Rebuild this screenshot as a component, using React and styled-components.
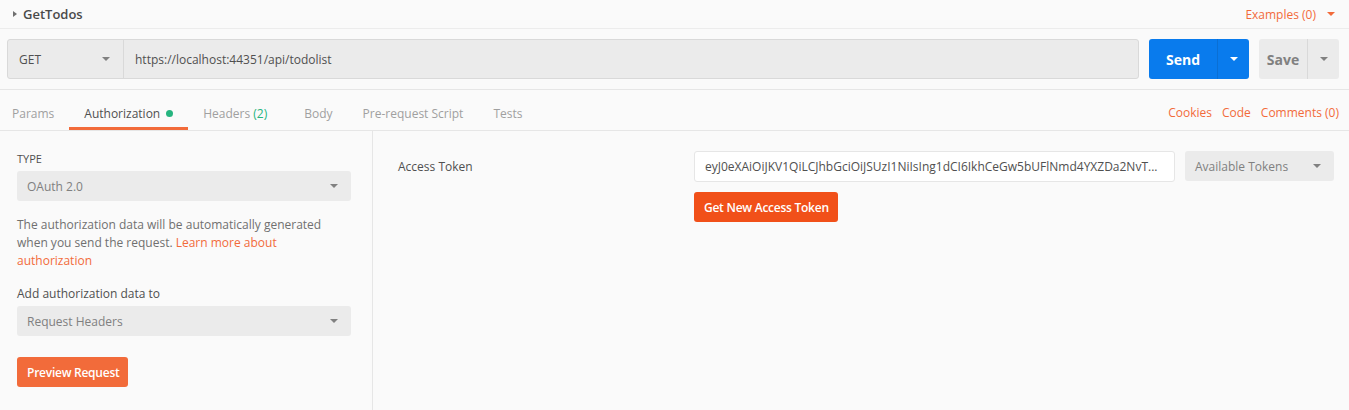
import React from "react";
import styled, { createGlobalStyle } from "styled-components";

const Global = createGlobalStyle`
  html, body { margin: 0; padding: 0; background: #fafafa; }
  body { font-family: "Open Sans", "Liberation Sans", sans-serif; color: #505050; font-size: 12px; }
  * { box-sizing: border-box; }
`;

const Page = styled.div`
  width: 1349px;
  height: 410px;
  background: #fafafa;
  display: flex;
  flex-direction: column;
`;

const TitleBar = styled.div`
  height: 29px;
  display: flex;
  align-items: center;
  justify-content: space-between;
  padding: 0 14px 0 13px;
  border-bottom: 1px solid #ececec;
`;

const Title = styled.div`
  display: flex;
  align-items: center;
  gap: 6px;
  font-size: 13px;
  font-weight: 600;
  color: #4a4a4a;
`;

const Caret = styled.span`
  width: 0;
  height: 0;
  border-top: 3px solid transparent;
  border-bottom: 3px solid transparent;
  border-left: 4px solid #707070;
`;

const DownCaret = styled.span`
  width: 0;
  height: 0;
  border-left: 4px solid transparent;
  border-right: 4px solid transparent;
  border-top: 4px solid ${(p) => p.$color || "#808080"};
`;

const Link = styled.span`
  color: #f26b3a;
  font-size: 12px;
`;

const Examples = styled.div`
  display: flex;
  align-items: center;
  gap: 11px;
`;

const RequestRow = styled.div`
  height: 61px;
  display: flex;
  align-items: center;
  padding: 0 10px 0 7px;
  border-bottom: 1px solid #e6e6e6;
`;

const UrlGroup = styled.div`
  flex: 1;
  height: 40px;
  display: flex;
  border: 1px solid #d9d9d9;
  border-radius: 3px;
  background: #ebebeb;
  margin-right: 10px;
`;

const Method = styled.div`
  width: 116px;
  display: flex;
  align-items: center;
  justify-content: space-between;
  padding: 0 13px 0 11px;
  border-right: 1px solid #d9d9d9;
  font-size: 12px;
  color: #505050;
`;

const Url = styled.div`
  flex: 1;
  display: flex;
  align-items: center;
  padding-left: 11px;
  font-size: 12px;
  color: #505050;
`;

const SplitButton = styled.div`
  height: 40px;
  display: flex;
  border-radius: 3px;
  background: ${(p) => p.$bg};
  color: ${(p) => p.$fg};
  margin-left: ${(p) => p.$ml || 0}px;
  font-weight: 700;
  font-size: 14px;
`;

const SplitMain = styled.div`
  width: ${(p) => p.$w}px;
  display: flex;
  align-items: center;
  justify-content: center;
  border-right: 1px solid ${(p) => p.$line};
`;

const SplitArrow = styled.div`
  width: ${(p) => p.$w}px;
  display: flex;
  align-items: center;
  justify-content: center;
`;

const TabBar = styled.div`
  height: 41px;
  display: flex;
  justify-content: space-between;
  border-bottom: 1px solid #e6e6e6;
  padding-right: 10px;
`;

const Tabs = styled.div`
  display: flex;
`;

const Tab = styled.div`
  display: flex;
  align-items: center;
  gap: 6px;
  padding: 9px ${(p) => p.$pr ?? 15}px 0 ${(p) => p.$pl ?? 15}px;
  font-size: 12px;
  color: ${(p) => (p.$active ? "#505050" : "#a0a0a0")};
  border-bottom: 3px solid ${(p) => (p.$active ? "#f26b3a" : "transparent")};
`;

const Count = styled.span`
  color: #26b47f;
`;

const Dot = styled.span`
  width: 7px;
  height: 7px;
  border-radius: 50%;
  background: #26b47f;
`;

const TabLinks = styled.div`
  display: flex;
  align-items: center;
  gap: 10px;
  padding-top: 5px;
`;

const Body = styled.div`
  flex: 1;
  display: flex;
`;

const Sidebar = styled.div`
  width: 373px;
  border-right: 1px solid #e6e6e6;
  padding: 21px 21px 0 17px;
  display: flex;
  flex-direction: column;
`;

const Label = styled.div`
  font-size: 11px;
  color: #505050;
  text-transform: uppercase;
  line-height: 14px;
  margin-bottom: 5px;
`;

const Select = styled.div`
  height: 30px;
  border-radius: 3px;
  background: #ebebeb;
  display: flex;
  align-items: center;
  justify-content: space-between;
  padding: 0 13px 0 10px;
  font-size: 12px;
  color: #808080;
  width: ${(p) => (p.$w ? `${p.$w}px` : "auto")};
`;

const Text = styled.p`
  margin: 15px 0 0;
  font-size: 12px;
  line-height: 18px;
  color: #707070;
`;

const SubLabel = styled.div`
  margin-top: 15px;
  font-size: 12px;
  line-height: 18px;
  color: #505050;
  margin-bottom: 3px;
`;

const Button = styled.div`
  align-self: flex-start;
  height: 30px;
  padding: 0 9px 0 10px;
  display: flex;
  align-items: center;
  border-radius: 3px;
  background: ${(p) => p.$bg};
  color: #fff;
  font-size: 12px;
  font-weight: 600;
  letter-spacing: -0.25px;
  margin-top: ${(p) => p.$mt || 0}px;
`;

const Content = styled.div`
  flex: 1;
  padding: 20px 15px 0 25px;
`;

const FieldRow = styled.div`
  display: flex;
  align-items: flex-start;
`;

const FieldLabel = styled.div`
  width: 296px;
  height: 31px;
  display: flex;
  align-items: center;
  font-size: 12px;
  color: #505050;
`;

const FieldBody = styled.div`
  display: flex;
  flex-direction: column;
`;

const Inputs = styled.div`
  display: flex;
  gap: 10px;
`;

const Input = styled.div`
  width: 481px;
  height: 31px;
  border: 1px solid #e6e6e6;
  border-radius: 3px;
  background: #fff;
  display: flex;
  align-items: center;
  padding: 0 10px;
  font-size: 12px;
  color: #505050;
  white-space: nowrap;
  overflow: hidden;
`;

const App = () => (
  <Page>
    <Global />
    <TitleBar>
      <Title>
        <Caret />
        GetTodos
      </Title>
      <Examples>
        <Link>Examples (0)</Link>
        <DownCaret $color="#f26b3a" />
      </Examples>
    </TitleBar>
    <RequestRow>
      <UrlGroup>
        <Method>
          GET
          <DownCaret />
        </Method>
        <Url>https://localhost:44351/api/todolist</Url>
      </UrlGroup>
      <SplitButton $bg="#097bed" $fg="#fff">
        <SplitMain $w={69} $line="#0a6fd4">Send</SplitMain>
        <SplitArrow $w={31}>
          <DownCaret $color="#fff" />
        </SplitArrow>
      </SplitButton>
      <SplitButton $bg="#ebebeb" $fg="#808080" $ml={10}>
        <SplitMain $w={49} $line="#d9d9d9">Save</SplitMain>
        <SplitArrow $w={31}>
          <DownCaret />
        </SplitArrow>
      </SplitButton>
    </RequestRow>
    <TabBar>
      <Tabs>
        <Tab $pl={12}>Params</Tab>
        <Tab $active>
          Authorization
          <Dot />
        </Tab>
        <Tab>
          <span>
            Headers <Count>(2)</Count>
          </span>
        </Tab>
        <Tab $pl={22} $pr={30}>Body</Tab>
        <Tab $pl={0}>Pre-request Script</Tab>
        <Tab>Tests</Tab>
      </Tabs>
      <TabLinks>
        <Link>Cookies</Link>
        <Link>Code</Link>
        <Link>Comments (0)</Link>
      </TabLinks>
    </TabBar>
    <Body>
      <Sidebar>
        <Label>Type</Label>
        <Select>
          OAuth 2.0
          <DownCaret />
        </Select>
        <Text>
          The authorization data will be automatically generated when you send
          the request. <Link>Learn more about authorization</Link>
        </Text>
        <SubLabel>Add authorization data to</SubLabel>
        <Select>
          Request Headers
          <DownCaret />
        </Select>
        <Button $bg="#f26b3a" $mt={21}>Preview Request</Button>
      </Sidebar>
      <Content>
        <FieldRow>
          <FieldLabel>Access Token</FieldLabel>
          <FieldBody>
            <Inputs>
              <Input>eyJ0eXAiOiJKV1QiLCJhbGciOiJSUzI1NiIsIng1dCI6IkhCeGw5bUFlNmd4YXZDa2NvT...</Input>
              <Select $w={149}>
                Available Tokens
                <DownCaret />
              </Select>
            </Inputs>
            <Button $bg="#f15019" $mt={10}>Get New Access Token</Button>
          </FieldBody>
        </FieldRow>
      </Content>
    </Body>
  </Page>
);

export default App;
